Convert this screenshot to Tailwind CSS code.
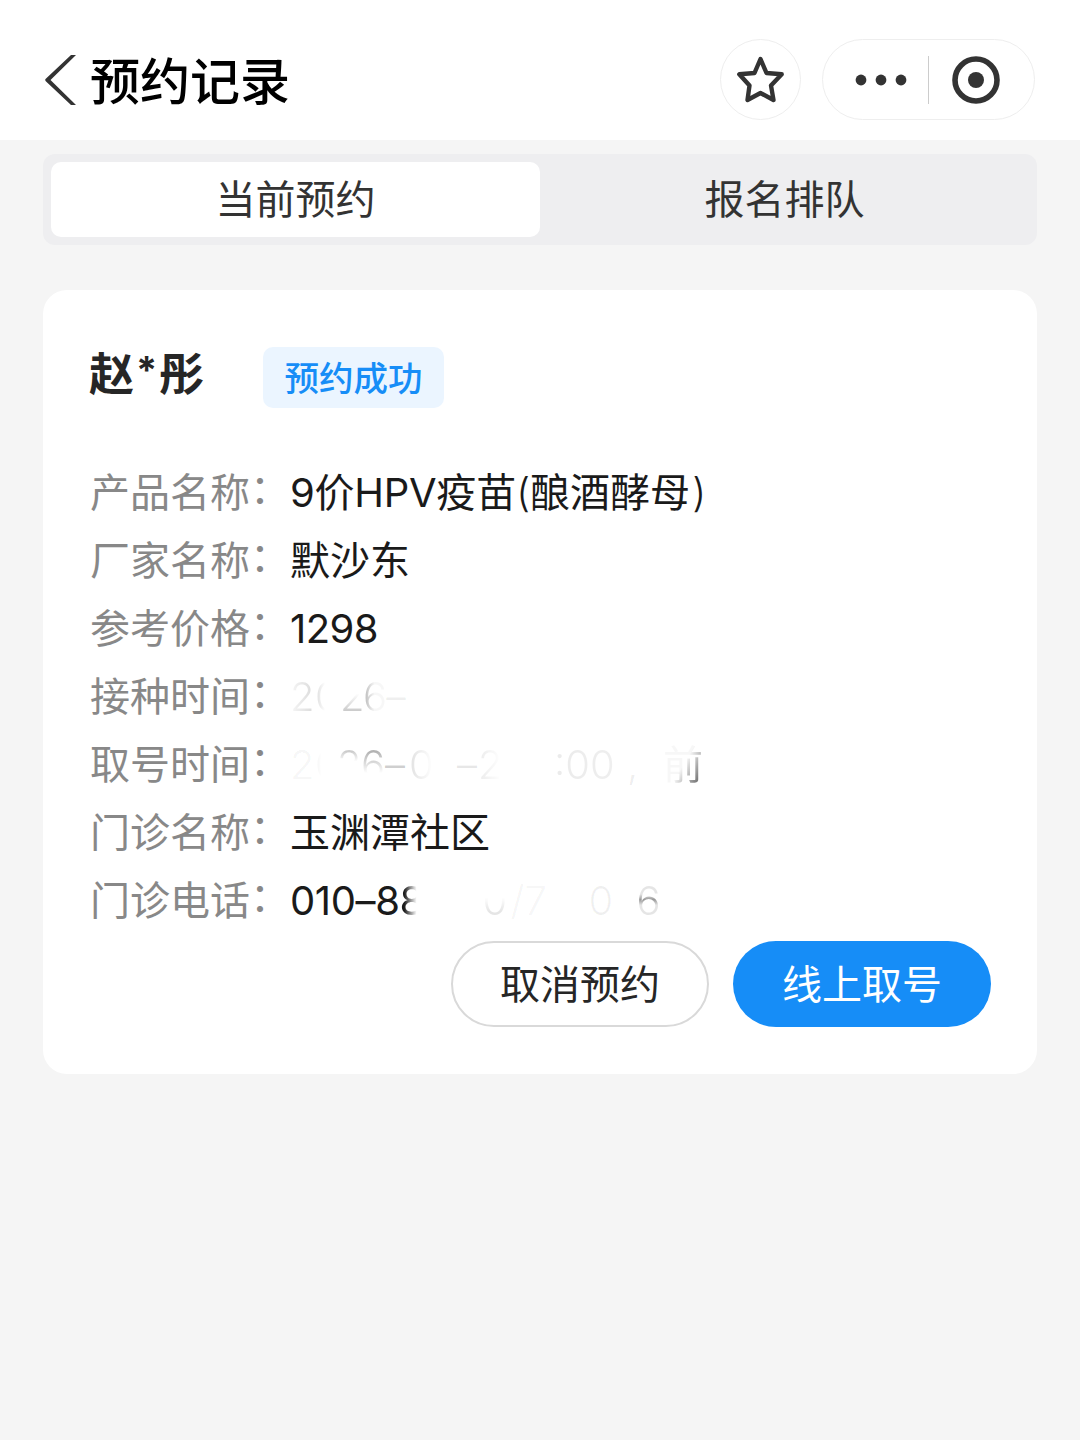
<!DOCTYPE html>
<html lang="zh-CN">

<head>
    <meta charset="UTF-8">
    <meta name="viewport" content="width=device-width, initial-scale=1.0">
    <title>预约记录</title>
    <script src="https://cdn.jsdelivr.net/npm/@tailwindcss/browser@4"></script>
</head>

<body class="min-h-screen bg-[#f5f5f5] font-['Inter','Noto_Sans_CJK_SC',sans-serif] text-[40px] text-[#1a1a1a]">

    <!-- Header -->
    <header class="flex h-[140px] items-center bg-white px-[45px] pt-[19px]">
        <svg class="h-[52px] w-8 shrink-0" viewBox="0 0 32 52" fill="#333">
            <path d="M26 1h5L5.500 26 31 51h-5L.8 27.200Q-.4 26 .8 24.800Z" />
        </svg>
        <h1 class="ml-[13px] pt-1 text-[50px] leading-none font-medium text-black">预约记录</h1>
        <button class="ml-auto flex size-[81px] items-center justify-center rounded-full border border-[#eee]" aria-label="收藏">
            <svg class="size-[50px]" viewBox="0 0 50 50" fill="none" stroke="#333" stroke-width="4.400" stroke-linejoin="round">
                <path d="M24.500 4 30.500 18 45.700 19.300 35 30.500 37.500 45 24.500 38 11.500 45 13.500 30.500 3.300 19.300 18.500 18Z" />
            </svg>
        </button>
        <div class="ml-[21px] flex h-[81px] w-[213px] items-center rounded-full border border-[#eee] pl-8">
            <svg class="h-3 w-[52px]" viewBox="0 0 52 12" fill="#333">
                <circle cx="6" cy="6" r="5.400" />
                <circle cx="26" cy="6" r="5.400" />
                <circle cx="46" cy="6" r="5.400" />
            </svg>
            <div class="ml-[21px] h-12 w-px bg-[#ccc]"></div>
            <svg class="ml-[23px] size-12" viewBox="0 0 48 48">
                <circle cx="24" cy="24" r="21" fill="none" stroke="#333" stroke-width="5.600" />
                <circle cx="24" cy="24" r="8" fill="#333" />
            </svg>
        </div>
    </header>

    <main class="px-[43px] pt-[14px]">
        <!-- Tabs -->
        <div class="grid h-[91px] grid-cols-2 rounded-xl bg-[#eeeef0] p-2 text-[#333]">
            <button class="rounded-[10px] bg-white leading-none">当前预约</button>
            <button class="leading-none">报名排队</button>
        </div>

        <!-- Appointment card -->
        <section class="mt-[45px] h-[784px] rounded-3xl bg-white pt-[57px] pr-[46px] pl-[46px]">
            <div class="flex h-[61px] items-center">
                <h2 class="w-[174px] pb-1.5 text-[45px] leading-none font-bold text-[#262626]">赵<span class="inline-block w-[25px] -translate-y-[7px] text-center text-[38px]">*</span>彤</h2>
                <span class="flex h-[61px] w-[181px] items-center justify-center rounded-[10px] bg-[#ebf5ff] pt-[3px] text-[34.5px] leading-none font-medium text-[#168df7]">预约成功</span>
            </div>

            <dl class="mt-[51px] grid grid-cols-[200px_1fr] auto-rows-[68px] pl-px leading-[68px] whitespace-nowrap">
                <dt class="text-[#888]">产品名称<span class="inline-block -translate-y-1">：</span></dt>
                <dd><span class="tracking-[-0.3px]">9价HPV</span>疫苗<span class="font-light">(</span>酿酒酵母<span class="ml-0.5 font-light">)</span></dd>
                <dt class="text-[#888]">厂家名称<span class="inline-block -translate-y-1">：</span></dt>
                <dd>默沙东</dd>
                <dt class="text-[#888]">参考价格<span class="inline-block -translate-y-1">：</span></dt>
                <dd class="tracking-[-0.6px]">1298</dd>
                <dt class="text-[#888]">接种时间<span class="inline-block -translate-y-1">：</span></dt>
                <dd class="flex font-light">
                    <span class="w-[25px] bg-linear-to-r from-black/3 to-black/15 bg-clip-text text-transparent">2</span>
                    <span class="w-[25px] bg-linear-to-r from-black/15 to-transparent to-40% bg-clip-text text-transparent">0</span>
                    <span class="w-[23px] bg-linear-to-t from-black/20 from-30% to-transparent to-55% bg-clip-text text-transparent">2</span>
                    <span class="w-[23px] bg-linear-to-r from-black/30 to-black/3 to-50% bg-clip-text text-transparent">6</span>
                    <span class="text-black/6">–</span>
                </dd>
                <dt class="text-[#888]">取号时间<span class="inline-block -translate-y-1">：</span></dt>
                <dd class="flex font-light">
                    <span class="w-[25px] text-black/5">2</span>
                    <span class="w-[22px] bg-linear-to-r from-black/5 to-transparent to-30% bg-clip-text text-transparent">0</span>
                    <span class="w-[24px] bg-linear-to-b from-black/20 from-30% to-transparent to-45% bg-clip-text text-transparent">2</span>
                    <span class="w-[24px] bg-linear-to-b from-black/30 from-30% to-transparent to-62% bg-clip-text text-transparent">6</span>
                    <span class="w-[24px] text-black/20">–</span>
                    <span class="w-[48px] bg-linear-to-r from-black/12 to-transparent to-50% bg-clip-text text-transparent">0</span>
                    <span class="w-[21px] text-black/10">–</span>
                    <span class="w-[76px] bg-linear-to-r from-black/8 to-transparent to-30% bg-clip-text text-transparent">2</span>
                    <span class="w-[73px] bg-linear-to-r from-black/8 to-black/6 bg-clip-text text-transparent">:00</span>
                    <span class="w-[36px] text-black/8">,</span>
                    <span class="bg-linear-to-br from-black/3 from-50% to-black/50 to-78% bg-clip-text font-normal text-transparent">前</span>
                </dd>
                <dt class="text-[#888]">门诊名称<span class="inline-block -translate-y-1">：</span></dt>
                <dd>玉渊潭社区</dd>
                <dt class="text-[#888]">门诊电话<span class="inline-block -translate-y-1">：</span></dt>
                <dd class="flex">
                    <span class="tracking-[-0.4px]">010–8</span>
                    <span class="w-[83px] bg-linear-to-r from-[#1a1a1a] from-5% to-transparent to-20% bg-clip-text text-transparent">8</span>
                    <span class="w-[28px] bg-linear-to-t from-black/10 from-35% to-transparent to-55% bg-clip-text font-light text-transparent">0</span>
                    <span class="w-[78px] font-light text-black/5">/7</span>
                    <span class="w-[48px] font-light text-black/6">0</span>
                    <span class="bg-linear-to-b from-black/10 from-40% via-black/40 via-48% to-black/10 to-56% bg-clip-text font-light text-transparent">6</span>
                </dd>
            </dl>

            <div class="mt-[6px] flex justify-end gap-6">
                <button class="h-[86px] w-[258px] rounded-full border-[2.5px] border-[#d9d9d9] pt-0.5 leading-none text-[#262626]">取消预约</button>
                <button class="h-[86px] w-[258px] rounded-full bg-[#168df7] pt-0.5 leading-none text-white">线上取号</button>
            </div>
        </section>
    </main>
</body>

</html>
